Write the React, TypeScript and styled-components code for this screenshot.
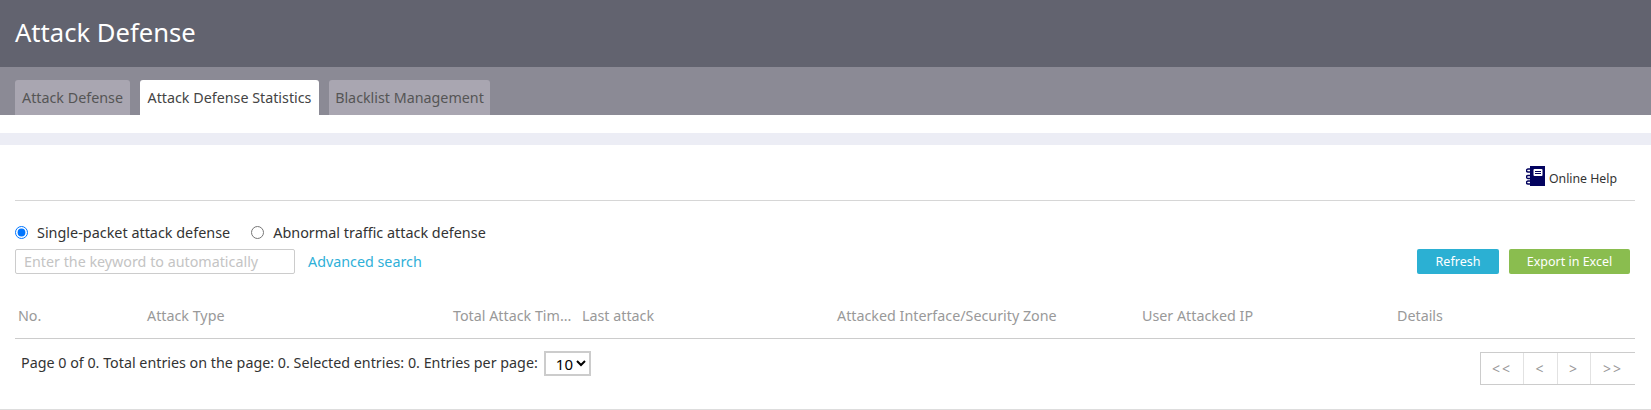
import React from "react";
import styled, { createGlobalStyle } from "styled-components";

const Global = createGlobalStyle`
  html, body { margin: 0; padding: 0; background: #fff; }
  body { font-family: "Noto Sans", "Open Sans", sans-serif; font-size: 14.3px; color: #333; overflow: hidden; }
`;
const Page = styled.div`width: 1651px; height: 410px; display: flex; flex-direction: column; border-bottom: 1px solid #ddd; box-sizing: border-box;`;
const Header = styled.header`height: 67px; background: #62636f; display: flex; align-items: center; padding-left: 15px; flex: none;`;
const Title = styled.h1`margin: 0; font-size: 25.6px; font-weight: 400; color: #fff; line-height: 32px; position: relative; top: -1px;`;
const TabBar = styled.nav`height: 48px; background: #8b8a95; display: flex; align-items: flex-end; gap: 10px; padding-left: 15px; flex: none;`;
const Tab = styled.div<{ $active?: boolean; $w: number }>`
  height: 35px; width: ${p => p.$w}px; box-sizing: border-box; display: flex; align-items: center; justify-content: center;
  border-radius: 3px 3px 0 0; font-size: 14.3px; white-space: nowrap;
  background: ${p => (p.$active ? "#fff" : "#a9a6b1")}; color: ${p => (p.$active ? "#444" : "#555")};
`;
const Gap = styled.div`height: 18px; flex: none;`;
const Band = styled.div`height: 12px; background: #ecedf5; flex: none;`;
const Content = styled.main`padding: 0 16px 0 15px; flex: 1; display: flex; flex-direction: column;`;
const HelpRow = styled.div`height: 56px; border-bottom: 1px solid #d6d6d6; display: flex; justify-content: flex-end; align-items: flex-start; padding: 21px 18px 0 0; box-sizing: border-box; flex: none; gap: 4px; font-size: 12.3px; color: #333;`;
const HelpText = styled.span`line-height: 20px; position: relative; top: 3px;`;
const RadioRow = styled.div`display: flex; align-items: center; margin-top: 21px; height: 20px; font-size: 14.4px; color: #333;`;
const RadioLabel = styled.label`display: flex; align-items: center; margin-right: 21px;`;
const Radio = styled.input`width: 13px; height: 13px; margin: 0 9px 0 0; accent-color: #0075ff;`;
const ToolRow = styled.div`display: flex; align-items: center; margin-top: 7px; height: 25px;`;
const Search = styled.input`
  width: 280px; height: 25px; box-sizing: border-box; border: 1px solid #ccc; border-radius: 2px; padding: 0 8px; font: inherit; font-size: 14.3px;
  &::placeholder { color: #c4c4c4; opacity: 1; }
`;
const Link = styled.a`color: #2fb0d8; margin-left: 13px; font-size: 14.3px; position: relative;`;
const Spacer = styled.div`flex: 1;`;
const Button = styled.button<{ $c: string; $w: number }>`
  height: 25px; width: ${p => p.$w}px; background: ${p => p.$c}; color: #fff; border: 0; border-radius: 2px; font: inherit; font-size: 12.5px; margin-left: 10px; padding: 0;
`;
const ToolEnd = styled.div`display: flex; margin-right: 5px;`;
const HeadRow = styled.div`display: grid; grid-template-columns: 129px 306px 129px 255px 305px 255px 138px; height: 65px; border-bottom: 1px solid #ccc; box-sizing: border-box; align-items: center; padding-top: 19px; flex: none; color: #999; font-size: 14.3px; padding-left: 3px;`;
const Head = styled.div`white-space: nowrap;`;
const Footer = styled.div`display: flex; justify-content: space-between; align-items: flex-start;`;
const PageInfo = styled.div`display: flex; align-items: center; margin: 11px 0 0 6px; gap: 6px; font-size: 14.3px; color: #333; height: 25px;`;
const Select = styled.select`width: 47px; height: 25px; margin-top: 2px; box-sizing: border-box; padding: 0 0 0 6px; font: inherit; font-size: 15px; background: #fff; border: 2px solid #ccc; border-radius: 0; color: #000;`;
const Pager = styled.div`display: flex; height: 33px; margin-top: 13px; border: 1px solid #ccc; border-right: 0; box-sizing: border-box;`;
const PageBtn = styled.div<{ $w: number; $last?: boolean }>`
  width: ${p => p.$w}px; display: flex; align-items: center; justify-content: center; color: #999; font-size: 14px; letter-spacing: 2px;
  border-right: ${p => (p.$last ? "0" : "1px solid #e2e2e2")}; box-sizing: border-box;
`;

const HelpIcon = () => (
  <svg width="19" height="20" viewBox="0 0 19 20">
    <rect x="4" y="0" width="15" height="20" fill="#03035f" />
    <rect x="7.5" y="3" width="9" height="7" rx="1" fill="#fff" />
    <rect x="9" y="5" width="6" height="1" fill="#03035f" />
    <rect x="9" y="7" width="6" height="1" fill="#03035f" />
    <path d="M5 3H2a1.5 1.5 0 0 0 0 3h3M5 9.5H2a1.5 1.5 0 0 0 0 3h3M5 15H2a1.5 1.5 0 0 0 0 3h3" fill="none" stroke="#03035f" strokeWidth="1.4" />
  </svg>
);

export default function App() {
  return (
    <Page>
      <Global />
      <Header><Title>Attack Defense</Title></Header>
      <TabBar>
        <Tab $w={115}>Attack Defense</Tab>
        <Tab $w={179} $active>Attack Defense Statistics</Tab>
        <Tab $w={161}>Blacklist Management</Tab>
      </TabBar>
      <Gap />
      <Band />
      <Content>
        <HelpRow><HelpIcon /><HelpText>Online Help</HelpText></HelpRow>
        <RadioRow>
          <RadioLabel><Radio type="radio" name="d" defaultChecked />Single-packet attack defense</RadioLabel>
          <RadioLabel><Radio type="radio" name="d" />Abnormal traffic attack defense</RadioLabel>
        </RadioRow>
        <ToolRow>
          <Search placeholder="Enter the keyword to automatically" />
          <Link>Advanced search</Link>
          <Spacer />
          <ToolEnd>
            <Button $c="#2bb0d3" $w={82}>Refresh</Button>
            <Button $c="#8abd4f" $w={121}>Export in Excel</Button>
          </ToolEnd>
        </ToolRow>
        <HeadRow>
          <Head>No.</Head><Head>Attack Type</Head><Head>Total Attack Tim...</Head><Head>Last attack</Head>
          <Head>Attacked Interface/Security Zone</Head><Head>User Attacked IP</Head><Head>Details</Head>
        </HeadRow>
        <Footer>
          <PageInfo>
            Page 0 of 0. Total entries on the page: 0. Selected entries: 0. Entries per page:
            <Select defaultValue="10"><option>10</option></Select>
          </PageInfo>
          <Pager>
            <PageBtn $w={43}>&lt;&lt;</PageBtn>
            <PageBtn $w={34}>&lt;</PageBtn>
            <PageBtn $w={33}>&gt;</PageBtn>
            <PageBtn $w={44} $last>&gt;&gt;</PageBtn>
          </Pager>
        </Footer>
      </Content>
    </Page>
  );
}
